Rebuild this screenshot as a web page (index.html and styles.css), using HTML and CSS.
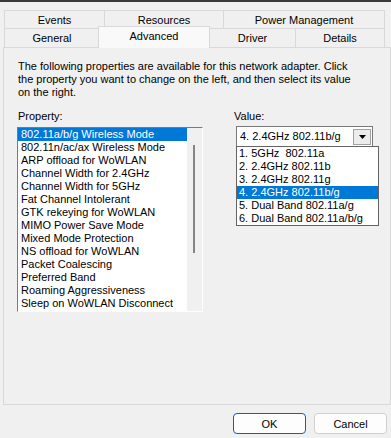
FILE: index.html
```html
<!DOCTYPE html>
<html lang="en">

<head>
    <meta charset="UTF-8">
    <title>Adapter Properties</title>
    <link rel="stylesheet" href="styles.css">
</head>

<body>
    <div class="titlebar"></div>

    <div class="tabs">
        <div class="tab-row tab-row-back">
            <div class="tab tab-events">Events</div>
            <div class="tab tab-resources">Resources</div>
            <div class="tab tab-power">Power Management</div>
        </div>
        <div class="tab-row tab-row-front">
            <div class="tab tab-general">General</div>
            <div class="tab tab-advanced active">Advanced</div>
            <div class="tab tab-driver">Driver</div>
            <div class="tab tab-details">Details</div>
        </div>
    </div>

    <div class="panel">
        <p class="intro">The following properties are available for this network adapter. Click the property you want to change on the left, and then select its value on the right.</p>

        <div class="fields">
            <div class="field">
                <div class="label">Property:</div>
                <div class="listbox">
                    <ul class="list">
                        <li class="selected">802.11a/b/g Wireless Mode</li>
                        <li>802.11n/ac/ax Wireless Mode</li>
                        <li>ARP offload for WoWLAN</li>
                        <li>Channel Width for 2.4GHz</li>
                        <li>Channel Width for 5GHz</li>
                        <li>Fat Channel Intolerant</li>
                        <li>GTK rekeying for WoWLAN</li>
                        <li>MIMO Power Save Mode</li>
                        <li>Mixed Mode Protection</li>
                        <li>NS offload for WoWLAN</li>
                        <li>Packet Coalescing</li>
                        <li>Preferred Band</li>
                        <li>Roaming Aggressiveness</li>
                        <li>Sleep on WoWLAN Disconnect</li>
                    </ul>
                    <div class="scroll-track">
                        <div class="scroll-thumb"></div>
                    </div>
                </div>
            </div>

            <div class="field field-value">
                <div class="label">Value:</div>
                <div class="combo">
                    <span class="combo-text">4. 2.4GHz 802.11b/g</span>
                    <span class="combo-btn">
                        <svg width="7" height="4" viewBox="0 0 7 4"><polygon points="0,0 7,0 3.5,4" fill="#000"/></svg>
                    </span>
                    <!-- open dropdown -->
                    <ul class="dropdown">
                        <li>1. 5GHz&nbsp; 802.11a</li>
                        <li>2. 2.4GHz 802.11b</li>
                        <li>3. 2.4GHz 802.11g</li>
                        <li class="selected">4. 2.4GHz 802.11b/g</li>
                        <li>5. Dual Band 802.11a/g</li>
                        <li>6. Dual Band 802.11a/b/g</li>
                    </ul>
                </div>
            </div>
        </div>
    </div>

    <div class="buttons">
        <button class="btn btn-default">OK</button>
        <button class="btn">Cancel</button>
    </div>
</body>

</html>
```

FILE: styles.css
```css
body {
    margin: 0;
    padding: 0;
    background-color: #f0f0f0;
    font-family: "Liberation Sans", Arial, sans-serif;
    font-size: 11px;
    line-height: 13px;
    color: #000;
}

.titlebar {
    height: 2px;
    background-color: #3a3a3a;
}

/* tabs */
.tabs {
    margin-top: 8px;
    padding-left: 4px;
}

.tab-row {
    display: flex;
}

.tab {
    box-sizing: border-box;
    border: 1px solid #d9d9d9;
    border-bottom: none;
    background-color: #f0f0f0;
    text-align: center;
    margin-left: -1px;
}

.tab:first-child {
    margin-left: 0;
}

.tab-row-back .tab {
    height: 18px;
    padding-top: 3px;
}

.tab-row-front .tab {
    height: 19px;
    padding-top: 3px;
}

.tab-events { width: 101px; }
.tab-resources { width: 120px; }
.tab-power { width: 162px; }

.tab-general { width: 96px; }
.tab-driver { width: 87px; }
.tab-details { width: 90px; }

.tab.active {
    width: 112px;
    height: 22px;
    margin-top: -2px;
    margin-left: -2px;
    margin-bottom: -1px;
    padding-top: 3px;
    background-color: #f9f9f9;
    position: relative;
    z-index: 1;
}

.tab.active + .tab {
    margin-left: -1px;
}

/* panel */
.panel {
    box-sizing: border-box;
    margin-left: 3px;
    width: 388px;
    height: 358px;
    border: 1px solid #d9d9d9;
    padding: 12px 14px 0 14px;
}

.intro {
    margin: 0;
    width: 345px;
}

.fields {
    display: grid;
    grid-template-columns: 186px auto;
    column-gap: 30px;
    margin-top: 11px;
    margin-left: -1px;
}

.label {
    padding-left: 1px;
    margin-bottom: 4px;
}

.listbox {
    display: flex;
    box-sizing: border-box;
    height: 185px;
    border: 1px solid;
    border-color: #7a7a7a #fdfdfd #fdfdfd #7a7a7a;
    background-color: #fff;
}

.list {
    list-style: none;
    margin: 0;
    padding: 0;
    flex: 1;
}

.list li,
.dropdown li {
    height: 13px;
    padding-left: 3px;
    white-space: nowrap;
}

.list li.selected,
.dropdown li.selected {
    background-color: #0078d7;
    color: #fff;
}

.scroll-track {
    width: 15px;
    background-color: #f0f0f0;
    padding-top: 17px;
}

.scroll-thumb {
    width: 2px;
    height: 108px;
    margin-left: 6px;
    background-color: #858585;
}

.field-value .label {
    margin-bottom: 3px;
}

.combo {
    position: relative;
    display: flex;
    align-items: center;
    box-sizing: border-box;
    width: 137px;
    height: 21px;
    margin-left: 3px;
    border: 1px solid #7a7a7a;
    background-color: #fff;
}

.combo-text {
    flex: 1;
    padding-left: 3px;
}

.combo-btn {
    display: flex;
    align-items: center;
    justify-content: center;
    box-sizing: border-box;
    width: 18px;
    height: 16px;
    margin-right: 1px;
    border: 1px solid #a0a0a0;
    background-color: #ececec;
}

.dropdown {
    position: absolute;
    top: 19px;
    left: -1px;
    box-sizing: border-box;
    width: 143px;
    margin: 0;
    padding: 0;
    list-style: none;
    border: 1px solid #646464;
    background-color: #fff;
    z-index: 2;
}

.dropdown li {
    padding-left: 2px;
}

/* dialog buttons */
.buttons {
    display: flex;
    justify-content: flex-end;
    gap: 8px;
    margin-top: 8px;
    padding-right: 4px;
}

.btn {
    box-sizing: border-box;
    width: 73px;
    height: 21px;
    padding: 0;
    border: 1px solid #d0d0d0;
    border-radius: 4px;
    background-color: #fdfdfd;
    font-family: "Liberation Sans", Arial, sans-serif;
    font-size: 11px;
    color: #000;
}

.btn-default {
    border-color: #0067c0;
}
```
